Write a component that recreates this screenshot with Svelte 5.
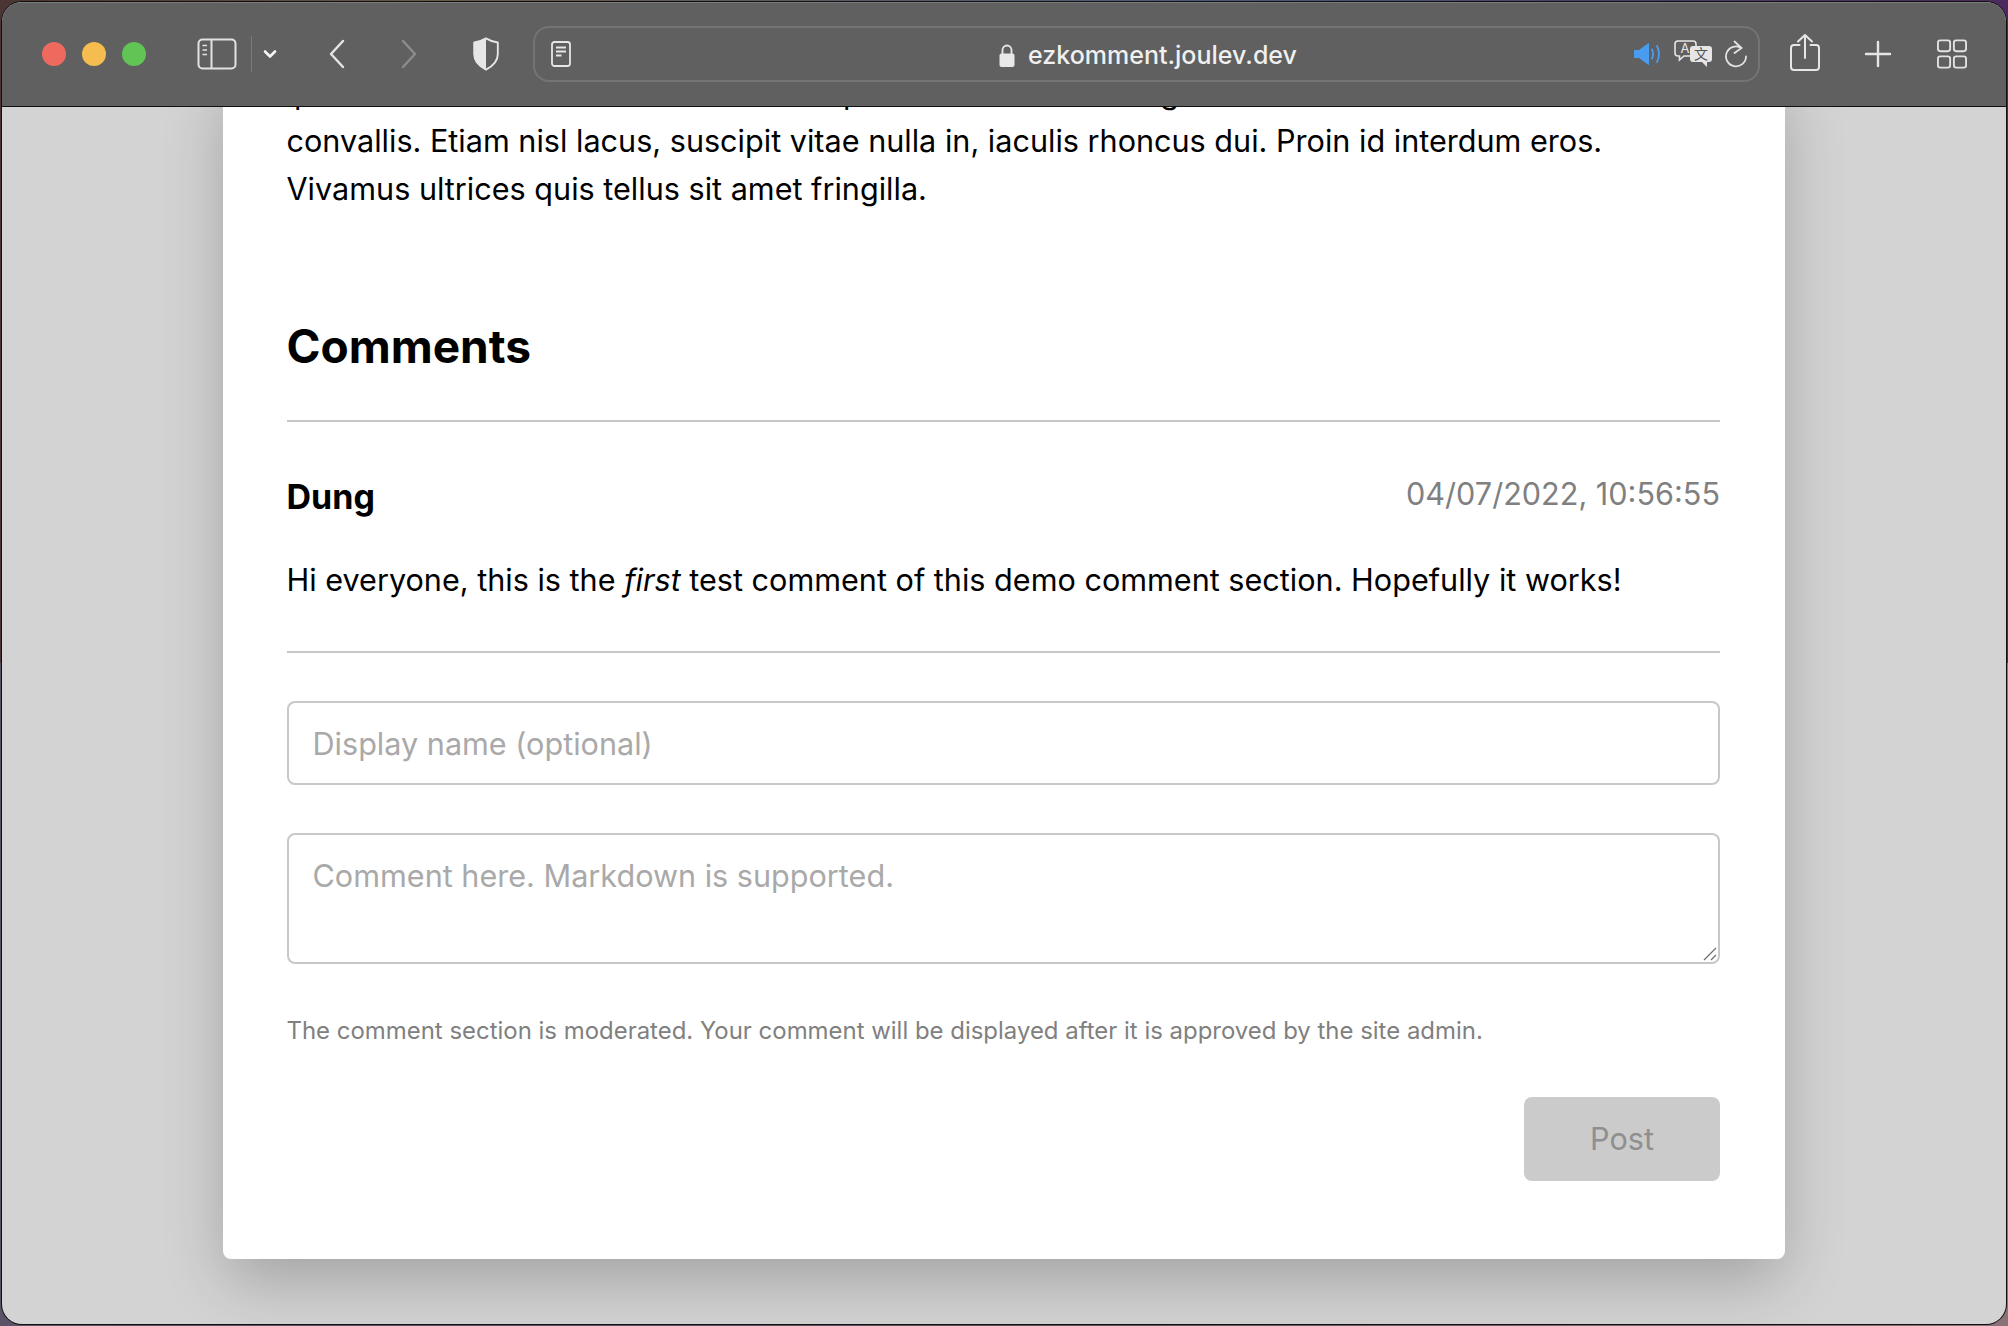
<script>
  let name = $state("");
  let body = $state("");
</script>

<div class="window">
  <header class="toolbar">
    <div class="lights">
      <span class="light red"></span>
      <span class="light yellow"></span>
      <span class="light green"></span>
    </div>

    <svg class="ico" width="40" height="32" viewBox="0 0 40 32" fill="none" stroke="#e2e2e2" stroke-width="2">
      <rect x="1.5" y="1.5" width="37" height="29" rx="4" />
      <path d="M14.5 1.5v29" />
      <path d="M5.500 7.500h4.500M5.500 12h4.500M5.500 16.500h4.500" stroke-width="1.600" />
    </svg>
    <span class="divider"></span>
    <svg class="ico" width="14" height="10" viewBox="0 0 14 10" fill="none" stroke="#f5f5f5" stroke-width="2.600" stroke-linecap="round" stroke-linejoin="round">
      <path d="M2 2.500l5 5 5-5" />
    </svg>
    <svg class="ico back" width="18" height="30" viewBox="0 0 18 30" fill="none" stroke="#e6e6e6" stroke-width="2.400" stroke-linecap="round" stroke-linejoin="round">
      <path d="M15 2L3 15l12 13" />
    </svg>
    <svg class="ico fwd" width="18" height="30" viewBox="0 0 18 30" fill="none" stroke="#8c8c8c" stroke-width="2.400" stroke-linecap="round" stroke-linejoin="round">
      <path d="M3 2l12 13L3 28" />
    </svg>
    <svg class="ico shield" width="28" height="34" viewBox="0 0 28 36">
      <path d="M14 1.500C10 4 6 5.300 1.500 5.800V18c0 7.500 5.500 13 12.500 16.500C21 31 26.500 25.500 26.500 18V5.800C22 5.300 18 4 14 1.500Z" fill="none" stroke="#e6e6e6" stroke-width="2" stroke-linejoin="round" />
      <path d="M14 1.500C10 4 6 5.300 1.500 5.800V18c0 7.500 5.500 13 12.500 16.500Z" fill="#e6e6e6" />
    </svg>

    <div class="address">
      <svg class="ico" width="20" height="26" viewBox="0 0 20 26" fill="none" stroke="#e6e6e6" stroke-width="1.800">
        <rect x="1" y="1" width="18" height="24" rx="2.500" />
        <path d="M5 6.500h10M5 10.500h10M5 14.500h5.500" />
      </svg>
      <div class="url">
        <svg width="16" height="23" viewBox="0 0 16 23">
          <rect x="0.500" y="9.500" width="15" height="13.500" rx="2" fill="#e8e8e8" />
          <path d="M3.500 10V6a4.500 4.500 0 0 1 9 0v4" fill="none" stroke="#e8e8e8" stroke-width="1.800" />
        </svg>
        <span>ezkomment.joulev.dev</span>
      </div>
      <svg class="ico" width="28" height="24" viewBox="0 0 28 24" fill="#4a9cf0">
        <path d="M1.500 8.500h4.500L15.500 1.500v21L6 15.500H1.500Z" stroke="#4a9cf0" stroke-linejoin="round" />
        <path d="M19 7.500c1.500 3 1.500 6 0 9M24 4c2.500 5 2.500 11 0 16" fill="none" stroke="#4a9cf0" stroke-width="1.800" stroke-linecap="round" />
      </svg>
      <svg class="ico translate" width="38" height="28" viewBox="0 0 38 28">
        <path d="M4 1h15a3 3 0 0 1 3 3v9a3 3 0 0 1-3 3h-9l-4.500 4v-4H4a3 3 0 0 1-3-3V4a3 3 0 0 1 3-3Z" fill="#606060" stroke="#e6e6e6" stroke-width="1.600" />
        <text x="11" y="13" class="glyph-a">A</text>
        <path d="M19 6h16a3 3 0 0 1 3 3v10a3 3 0 0 1-3 3h-2v5l-5-5h-9a3 3 0 0 1-3-3V9a3 3 0 0 1 3-3Z" fill="#e6e6e6" />
        <text x="27" y="19" class="glyph-zh">文</text>
      </svg>
      <svg class="ico reload" width="24" height="28" viewBox="0 0 24 28" fill="none" stroke="#e2e2e2" stroke-width="1.800" stroke-linecap="round" stroke-linejoin="round">
        <path d="M17.500 8A10 10 0 1 0 22 16.500" />
        <path d="M10.500 1.500l7 6.500-7 5" />
      </svg>
    </div>

    <svg class="ico share" width="30" height="38" viewBox="0 0 30 38" fill="none" stroke="#e6e6e6" stroke-width="2" stroke-linecap="round" stroke-linejoin="round">
      <path d="M9.500 12H4a3 3 0 0 0-3 3v19a3 3 0 0 0 3 3h22a3 3 0 0 0 3-3V15a3 3 0 0 0-3-3h-5.500" />
      <path d="M15 25V2M8 8.500L15 2l7 6.500" />
    </svg>
    <svg class="ico plus" width="28" height="28" viewBox="0 0 28 28" fill="none" stroke="#e6e6e6" stroke-width="2.400" stroke-linecap="round">
      <path d="M14 2v24M2 14h24" />
    </svg>
    <svg class="ico tabs" width="30" height="30" viewBox="0 0 32 32" fill="none" stroke="#e2e2e2" stroke-width="2">
      <rect x="1" y="1.500" width="13" height="11.500" rx="2.500" />
      <rect x="18" y="1.500" width="13" height="11.500" rx="2.500" />
      <rect x="1" y="18.500" width="13" height="12" rx="2.500" />
      <rect x="18" y="18.500" width="13" height="12" rx="2.500" />
    </svg>
  </header>

  <main class="page">
    <article class="card">
      <p>
        ipsum dolor sit amet elit sed et nunc a pretium nulla at ante ligula sed diam a urna ut risus non nisl at leo in<br />
        convallis. Etiam nisl lacus, suscipit vitae nulla in, iaculis rhoncus dui. Proin id interdum eros.<br />
        Vivamus ultrices quis tellus sit amet fringilla.
      </p>

      <h2>Comments</h2>

      <section class="comment">
        <div class="meta">
          <strong>Dung</strong>
          <time>04/07/2022, 10:56:55</time>
        </div>
        <p>Hi everyone, this is the <em>first</em> test comment of this demo comment section. Hopefully it works!</p>
      </section>

      <form class="form" onsubmit={(e) => e.preventDefault()}>
        <input type="text" placeholder="Display name (optional)" bind:value={name} />
        <div class="area">
          <textarea placeholder="Comment here. Markdown is supported." bind:value={body}></textarea>
          <svg class="grip" width="14" height="14" viewBox="0 0 14 14" fill="none" stroke="#707070" stroke-width="1.300">
            <path d="M1 13L13 1M8 13l5-5" />
          </svg>
        </div>
        <small>The comment section is moderated. Your comment will be displayed after it is approved by the site admin.</small>
        <div class="actions">
          <button type="submit" disabled>Post</button>
        </div>
      </form>
    </article>
  </main>
</div>

<style>
  :global(body) {
    margin: 0;
    height: 1326px;
    overflow: hidden;
    background:
      linear-gradient(90deg, #4a3534, #6a5a4a 22%, #4b5a7a 60%, #4a2a5e) top / 100% 50% no-repeat,
      linear-gradient(90deg, #5a5266, #57505c 50%, #8a7378) bottom / 100% 50% no-repeat;
  }

  .window {
    box-sizing: border-box;
    width: 2004px;
    height: 1322px;
    margin: 2px;
    border-radius: 20px;
    overflow: hidden;
    display: flex;
    flex-direction: column;
    background: #d3d3d3;
    box-shadow: 0 0 0 1px #111;
    font-family: Inter, "Liberation Sans", sans-serif;
  }

  .toolbar {
    flex: none;
    box-sizing: border-box;
    height: 105px;
    display: flex;
    align-items: center;
    padding-left: 40px;
    background: #606060;
    border-bottom: 1.500px solid #111;
    box-shadow: inset 0 1px 0 #7c7c7c;
  }

  .ico {
    flex: none;
    display: block;
  }

  .lights {
    display: flex;
    gap: 16px;
    margin-right: 51px;
  }

  .light {
    width: 24px;
    height: 24px;
    border-radius: 50%;
  }

  .red { background: #ee6a5f; }
  .yellow { background: #f5bd4f; }
  .green { background: #61c454; }

  .divider {
    width: 1px;
    height: 36px;
    margin: 0 11px 0 14px;
    background: #7a7a7a;
  }

  .back { margin-left: 51px; }
  .fwd { margin-left: 54px; }
  .shield { margin-left: 54px; }

  .address {
    flex: none;
    box-sizing: border-box;
    width: 1227px;
    height: 56px;
    margin-left: 33px;
    padding: 0 10px 0 16px;
    display: flex;
    align-items: center;
    border: 2px solid #747474;
    border-radius: 16px;
  }

  .url {
    flex: 1;
    display: flex;
    align-items: center;
    justify-content: center;
    gap: 13px;
    padding: 2px 0 0 92px;
    color: #f0f0f0;
    font-size: 25px;
    font-weight: 500;
  }

  .translate { margin-left: 13px; }
  .reload { margin-left: 12px; }

  .glyph-a {
    font-size: 13px;
    fill: #e6e6e6;
    text-anchor: middle;
  }

  .glyph-zh {
    font-family: "Noto Sans CJK SC", sans-serif;
    font-size: 14px;
    fill: #555;
    text-anchor: middle;
  }

  .share {
    margin: 0 0 4px 30px;
  }

  .plus { margin-left: 44px; }
  .tabs { margin-left: 45px; }

  .page {
    flex: 1;
    min-height: 0;
    overflow: hidden;
    display: flex;
    justify-content: center;
  }

  .card {
    box-sizing: border-box;
    width: 1562px;
    height: 1190px;
    margin-top: -38px;
    padding: 0 65px 0 63.500px;
    background: #fff;
    border-radius: 0 0 8px 8px;
    box-shadow: 0 24px 64px -4px rgba(0, 0, 0, 0.24);
    color: #000;
    font-size: 30.6px;
    line-height: 48px;
  }

  p {
    margin: 0;
    white-space: nowrap;
  }

  h2 {
    margin: 0;
    padding: 104px 0 45px;
    font-size: 46px;
    line-height: 58px;
    font-weight: 700;
    border-bottom: 2px solid #c8c8c8;
  }

  .comment {
    padding: 51px 0 47px;
    border-bottom: 2px solid #c8c8c8;
  }

  .meta {
    display: flex;
    justify-content: space-between;
    margin-bottom: 35px;
  }

  .meta strong {
    font-size: 34px;
    font-weight: 700;
  }

  .meta time {
    margin-top: -3px;
    color: #808080;
  }

  .form {
    display: flex;
    flex-direction: column;
    padding-top: 48px;
  }

  input,
  textarea {
    box-sizing: border-box;
    width: 100%;
    padding: 0 24px;
    border: 2px solid #c8c8c8;
    border-radius: 8px;
    font: inherit;
    color: #000;
    background: #fff;
    outline: none;
  }

  input {
    height: 84px;
  }

  .area {
    position: relative;
    margin-top: 48px;
  }

  textarea {
    display: block;
    height: 131px;
    padding-top: 17px;
    resize: none;
  }

  .grip {
    position: absolute;
    right: 3px;
    bottom: 3px;
    pointer-events: none;
  }

  ::placeholder {
    color: #a9a9a9;
    opacity: 1;
  }

  small {
    margin-top: 51px;
    font-size: 23.950px;
    line-height: 32px;
    color: #808080;
  }

  .actions {
    display: flex;
    justify-content: flex-end;
    margin-top: 50px;
  }

  button {
    width: 196px;
    height: 84px;
    border: none;
    border-radius: 8px;
    background: #cbcbcb;
    color: #8f8f8f;
    font: inherit;
  }
</style>
